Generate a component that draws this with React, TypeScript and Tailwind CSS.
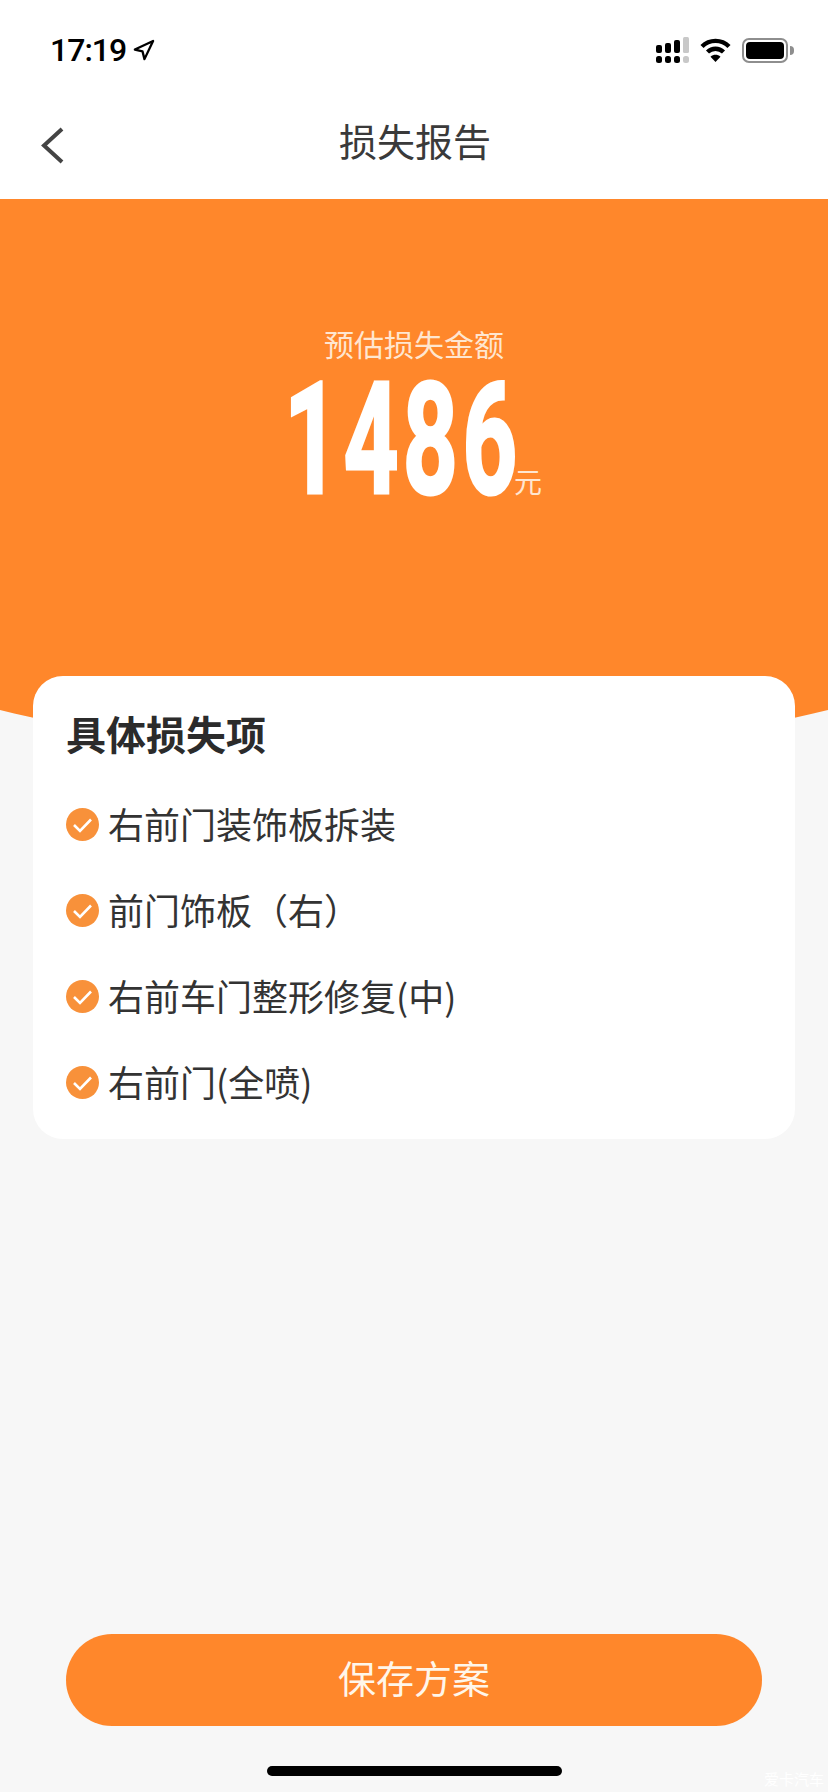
import { Navigation } from 'lucide-react';

const items = ['右前门装饰板拆装', '前门饰板（右）', '右前车门整形修复(中)', '右前门(全喷)'];
const cjk = "font-['Noto_Sans_CJK_SC','Noto_Sans',sans-serif]";

const SignalIcon = () => (
    <svg width="33" height="26" viewBox="0 0 33 26" fill="#000">
        <rect x="0" y="8" width="6" height="8" rx="2" />
        <rect x="9" y="6" width="6" height="10" rx="2" />
        <rect x="18" y="3" width="6" height="13" rx="2" />
        <rect x="27" y="0" width="6" height="16" rx="1.5" fill="#c8c8c8" />
        <rect x="0" y="19" width="6" height="7" rx="2.5" />
        <rect x="9" y="19" width="6" height="7" rx="2.5" />
        <rect x="18" y="19" width="6" height="7" rx="2.5" />
        <rect x="27" y="19" width="6" height="7" rx="2.5" fill="#c8c8c8" />
    </svg>
);

const WifiIcon = () => (
    <svg width="31" height="24" viewBox="0 0 31 24" fill="none" stroke="#000" strokeWidth="4.4">
        <path d="M2 8.5C9.5 1 21.500 1 29 8.500" />
        <path d="M7.500 14C12 9.700 19 9.700 23.500 14" />
        <path d="M15.500 24L10.500 18.800C13.500 16.200 17.500 16.200 20.500 18.800Z" fill="#000" stroke="none" />
    </svg>
);

const BatteryIcon = () => (
    <div className="flex items-center">
        <div className="w-[46px] h-[25px] rounded-[7px] border-2 border-[#8e8e8e] p-[2px]">
            <div className="w-full h-full rounded-[4px] bg-black" />
        </div>
        <div className="w-[4px] h-[9px] ml-[2px] rounded-r-full bg-[#8e8e8e]" />
    </div>
);

const CheckBadge = () => (
    <svg width="33" height="33" viewBox="0 0 33 33" className="shrink-0">
        <circle cx="16.500" cy="16.500" r="16.500" fill="#f8913a" />
        <path d="M8 17L14 23L25 11.500" fill="none" stroke="#fff" strokeWidth="2.600" />
    </svg>
);

export default function App() {
    return (
        <div className={`relative w-[828px] h-[1792px] overflow-hidden flex flex-col bg-[#f7f7f7] ${cjk}`}>
            <div className="h-[92px] bg-white flex items-center justify-between pl-[50px] pr-[34px] pt-[8px]">
                <div className="flex items-center gap-[6px] text-black">
                    <span className="font-['Roboto',sans-serif] font-medium text-[32px] leading-none tracking-[-1px]">17:19</span>
                    <Navigation size={23} strokeWidth={2.4} />
                </div>
                <div className="flex items-center gap-[11px]">
                    <SignalIcon />
                    <WifiIcon />
                    <BatteryIcon />
                </div>
            </div>

            <div className="relative h-[107px] bg-white flex items-center justify-center pb-[12px]">
                <svg width="23" height="37" viewBox="0 0 23 37" fill="none" stroke="#444" strokeWidth="4" className="absolute left-[41px] top-[35px]">
                    <path d="M21 2L3 18.500L21 35" />
                </svg>
                <span className="pl-[2px] text-[38px] leading-none text-[#3a3a3a]">损失报告</span>
            </div>

            <div className="h-[511px] bg-[#ff872b] flex flex-col items-center pt-[124px]">
                <div className="text-[30px] leading-[40px] text-[#ffe6d0]">预估损失金额</div>
                <div className="flex items-end pl-[6px] mt-[9px]">
                    <div className="w-[222px] flex justify-center">
                        <span className="font-['Roboto',sans-serif] font-bold text-[155px] leading-[136px] tracking-[7px] text-white [-webkit-text-stroke:3px_white] scale-x-[0.62] whitespace-nowrap">1486</span>
                    </div>
                    <span className="text-[28px] leading-[40px] text-[#ffe6d0] mb-[7px]">元</span>
                </div>
            </div>
            <svg width="828" height="45" viewBox="0 0 828 45" className="shrink-0">
                <path d="M0 0C120 30 280 45 414 45C548 45 708 30 828 0Z" fill="#ff872b" />
            </svg>

            <div className="relative mx-[33px] -mt-[79px] h-[463px] rounded-[30px] bg-white pl-[33px] pt-[33px]">
                <h1 className="text-[40px] leading-[48px] font-bold text-[#2b2b2b]">具体损失项</h1>
                <ul className="mt-[42px] flex flex-col gap-[36px]">
                    {items.map((item) => (
                        <li key={item} className="flex items-center gap-[9px] h-[50px] text-[36px] leading-none text-[#333]">
                            <CheckBadge />
                            <span className="-mt-[3px]">{item}</span>
                        </li>
                    ))}
                </ul>
            </div>

            <div className="mt-auto flex flex-col items-center">
                <button className="w-[696px] h-[92px] rounded-full bg-[#ff872b] pb-[8px] text-[38px] text-[#fff6ea]">保存方案</button>
                <div className="w-[295px] h-[10px] rounded-full bg-black mt-[40px] mb-[16px]" />
            </div>

            <span className="absolute right-[4px] bottom-[6px] text-[15px] leading-none text-white">爱卡汽车</span>
        </div>
    );
}
